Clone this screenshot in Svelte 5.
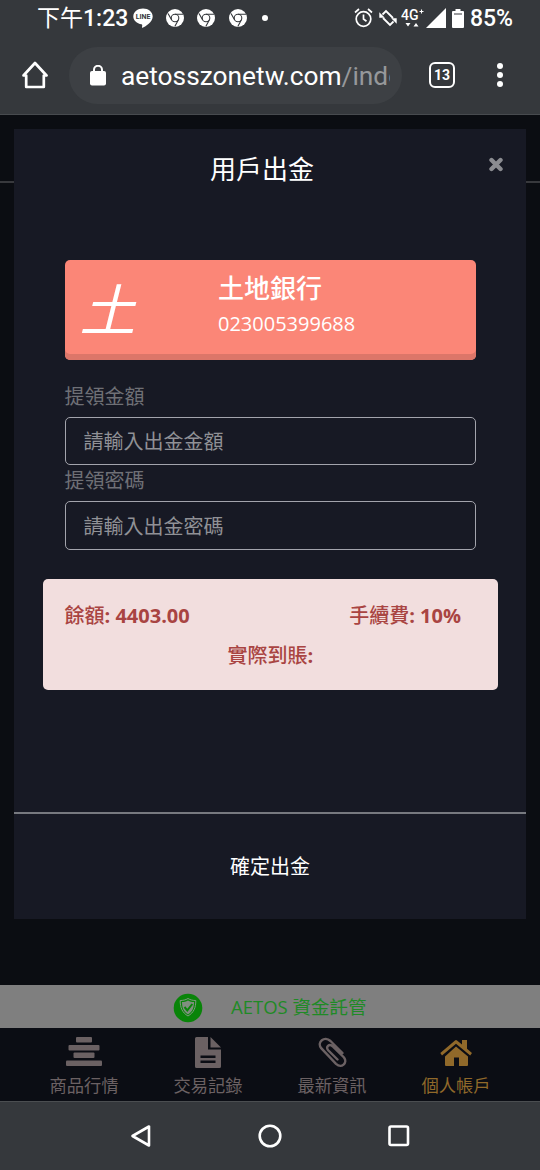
<script>
  const bank = { logo: '土', name: '土地銀行', account: '023005399688' };

  const fields = [
    { id: 'amount', label: '提領金額', placeholder: '請輸入出金金額', type: 'text' },
    { id: 'password', label: '提領密碼', placeholder: '請輸入出金密碼', type: 'password' }
  ];

  const tabs = [
    { icon: 'market', label: '商品行情' },
    { icon: 'records', label: '交易記錄' },
    { icon: 'news', label: '最新資訊' },
    { icon: 'account', label: '個人帳戶' }
  ];

  let values = $state({ amount: '', password: '' });
  let activeTab = $state('account');
  let showModal = $state(true);
</script>

<div class="screen">
  <header class="status">
    <span class="clock"><span>下午</span>1:23</span>
    <svg class="line-app" width="20" height="20" viewBox="0 0 20 20">
      <path d="M10 .5C4.6.5.3 4 .3 8.4c0 3.9 3.5 7.1 8.2 7.8 1.3.3.6 1.6.5 3 0 .6.5.6 1.1.3 2.2-1 9.6-5.6 9.6-11.1C19.7 4 15.4.5 10 .5z" fill="#fff" />
      <text x="10" y="11" text-anchor="middle">LINE</text>
    </svg>
    {#each [0, 1, 2] as n (n)}
      <svg class="chrome" width="18" height="18" viewBox="0 0 18 18">
        <circle cx="9" cy="9" r="9" fill="#fff" />
        <g fill="none" stroke="#35383c" stroke-width="1.1">
          <circle cx="9" cy="9" r="3.8" />
          <path d="M9 5.2h8.2M5.7 11 2 4.5M12.3 11 8.8 17.5" />
        </g>
      </svg>
    {/each}
    <span class="more"></span>
    <div class="system">
      <svg width="19" height="20" viewBox="0 0 19 20" fill="none" stroke="#fff" stroke-width="1.7">
        <circle cx="9.5" cy="11" r="7.3" />
        <path d="M9.5 6.5V11l3 2.2M1 4.5 5 1M18 4.5 14 1" />
      </svg>
      <svg class="rotate" width="18" height="18" viewBox="0 0 18 18" fill="none" stroke="#fff" stroke-width="1.8">
        <path d="M3.5 5.5 7 2l7 7M14.500 12.500 11 16l-7-7" />
        <path d="M.3 3.300v5.500h5.500zM17.700 14.700V9.200h-5.500z" fill="#fff" stroke="none" />
      </svg>
      <svg class="network" width="24" height="22" viewBox="0 0 24 22">
        <text x="0" y="13">4G</text>
        <path d="M18.5 4.5h4M20.5 2.5v4" stroke="#fff" stroke-width="1.1" />
        <path d="M4.500 16h5L7 19.500zM12.500 19.500h5L15 16z" fill="#fff" />
      </svg>
      <svg class="signal" width="20" height="20" viewBox="0 0 20 20"><path d="M20 0v20H0z" fill="#fff" /></svg>
      <svg class="battery" width="12" height="19" viewBox="0 0 12 19">
        <path d="M3.5 0h5v2H11q1 0 1 1v15q0 1-1 1H1q-1 0-1-1V3q0-1 1-1h2.5z" fill="#fff" />
        <path d="M2 5h8" stroke="#77797c" stroke-width="1.5" />
      </svg>
      <span class="percent">85%</span>
    </div>
  </header>

  <div class="toolbar">
    <svg class="home" width="26" height="28" viewBox="0 0 26 28" fill="none" stroke="#fff" stroke-width="2.7" stroke-linejoin="round">
      <path d="M1.5 14.5 13 2l11.5 12.5h-2.700V26H4.200V14.500z" />
    </svg>
    <div class="url">
      <svg width="16" height="21" viewBox="0 0 16 21">
        <rect y="6" width="16" height="14.5" rx="2" fill="#fff" />
        <path d="M4 7V4.800a4 4 0 0 1 8 0V7" fill="none" stroke="#fff" stroke-width="2" />
      </svg>
      <span class="address">aetosszonetw.com<span>/inde</span></span>
    </div>
    <span class="tab-count">13</span>
    <span class="kebab"><i></i><i></i><i></i></span>
  </div>

  <main class="page">
    <div class="page-header"></div>
    <div class="page-body"></div>

    <div class="trust">
      <svg width="30" height="30" viewBox="0 0 30 30">
        <circle cx="15" cy="15" r="14.3" fill="#098409" />
        <path d="M15 5.5c2.5 1.5 5 2 7.8 2 0 7-1.8 12-7.8 15.5C9 19.5 7.2 14.5 7.2 7.500c2.800 0 5.300-.5 7.800-2z" fill="none" stroke="#7f9a7f" stroke-width="1" />
        <path d="M15 7.500c2 1.200 4 1.600 6 1.600 0 5.500-1.300 9.500-6 12.400C10.300 18.600 9 14.600 9 9.100c2 0 4-.4 6-1.600z" fill="#7f8f7f" />
        <path d="m11.500 14 2.800 3.300 5-6.300" fill="none" stroke="#098409" stroke-width="2" />
      </svg>
      <span>AETOS 資金託管</span>
    </div>

    <nav class="tabs">
      {#each tabs as tab (tab.icon)}
        <button class="tab" class:active={tab.icon === activeTab} onclick={() => (activeTab = tab.icon)}>
          <svg width="36" height="32" viewBox="0 0 36 32" fill="currentColor">
            {#if tab.icon === 'market'}
              <rect x="10" y="0" width="16" height="5.5" rx="1" />
              <rect x="2.5" y="8" width="31" height="5.5" rx="1" />
              <rect x="7.5" y="15.500" width="21" height="5.500" rx="1" />
              <rect x="0" y="23.500" width="36" height="5.500" rx="1" />
            {:else if tab.icon === 'records'}
              <path fill-rule="evenodd" d="M6.500 0H18v12.500h13V29.500q0 1.500-1.500 1.500H6.500Q5 31 5 29.500v-28Q5 0 6.500 0zM10.500 18.500V21h15v-2.500zM10.500 23.500V26h15v-2.500z" />
              <path d="M20.500 0 31 10.500H20.500z" />
            {:else if tab.icon === 'news'}
              <path
                d="M28.500 16 16.500 4C10.500-1.500 2.500 5 7.200 11.200L22 26.800c5.500 5 12-.8 8-6.300L18.500 9.200c-3.500-2.800-7 .8-4.300 4.100L23.500 22.500"
                fill="none" stroke="currentColor" stroke-width="2.4" stroke-linecap="round"
              />
            {:else}
              <path d="M18 9.500 30 19.500v8.500q0 1-1 1h-8v-8.500h-5V29H8q-1 0-1-1v-8.500z" />
              <path d="M2.300 16 17 3.500q1-.8 2 0l5 4.100V3h5v8.700l5 4.300-1.800 2.400L18 6.800 4 18.400z" />
            {/if}
          </svg>
          <span>{tab.label}</span>
        </button>
      {/each}
    </nav>

    {#if showModal}
      <section class="modal">
        <div class="modal-header">
          <h4>用戶出金</h4>
          <button class="close" aria-label="close" onclick={() => (showModal = false)}>
            <svg width="14" height="15" viewBox="0 0 14 15"><path d="m2.500 3 9 9M11.500 3l-9 9" stroke="#8b8c91" stroke-width="4.400" stroke-linecap="round" /></svg>
          </button>
        </div>

        <div class="modal-body">
          <div class="card">
            <i class="logo">{bank.logo}</i>
            <div class="bank">
              <strong>{bank.name}</strong>
              <span>{bank.account}</span>
            </div>
          </div>

          {#each fields as field (field.id)}
            <label for={field.id}>{field.label}</label>
            <input id={field.id} type={field.type} placeholder={field.placeholder} bind:value={values[field.id]} />
          {/each}

          <div class="summary">
            <div class="row">
              <span>餘額<b>: 4403.00</b></span>
              <span>手續費<b>: 10%</b></span>
            </div>
            <div class="received">實際到賬<b>:</b></div>
          </div>
        </div>

        <button class="submit">確定出金</button>
      </section>
    {/if}
  </main>

  <footer class="android-nav">
    <svg width="22" height="24" viewBox="0 0 22 24"><path d="M19 2.500v19L2.500 12z" /></svg>
    <svg width="24" height="24" viewBox="0 0 24 24"><circle cx="12" cy="12" r="10.3" /></svg>
    <svg width="22" height="22" viewBox="0 0 22 22"><rect x="1.5" y="1.5" width="18.5" height="18.5" rx="1.5" /></svg>
  </footer>
</div>

<style>
  :global(body) {
    background: #35383c;
  }

  .screen {
    display: flex;
    flex-direction: column;
    width: 540px;
    height: 1170px;
    overflow: hidden;
    background: #35383c;
    color: #fff;
    font-family: "Open Sans", "Noto Sans CJK TC", sans-serif;
  }

  button {
    margin: 0;
    padding: 0;
    border: none;
    background: none;
    color: inherit;
    font-family: inherit;
  }

  svg {
    display: block;
    flex: none;
  }

  /* Status bar */

  .status {
    display: flex;
    align-items: center;
    height: 36px;
    padding: 0 27px 0 37px;
    box-sizing: border-box;
    font: 500 23px/36px Roboto, "Noto Sans CJK TC", sans-serif;
  }

  .clock {
    width: 96px;
    padding-top: 1px;
    white-space: nowrap;
  }

  .clock span {
    font-weight: 400;
  }

  .line-app text {
    font: bold 7px Roboto, sans-serif;
    fill: #35383c;
  }

  .chrome {
    margin-left: 13.2px;
  }

  .more {
    width: 6px;
    height: 6px;
    margin-left: 15px;
    border-radius: 50%;
    background: #fff;
  }

  .system {
    display: flex;
    align-items: center;
    margin-left: auto;
  }

  .rotate {
    margin-left: 6px;
  }

  .network {
    margin-left: 4px;
  }

  .network text {
    font: 500 14px Roboto, sans-serif;
    fill: #fff;
  }

  .signal {
    margin-left: 1px;
  }

  .battery {
    margin: 0 6px;
  }

  .percent {
    padding-top: 1px;
  }

  /* Browser toolbar */

  .toolbar {
    display: flex;
    align-items: center;
    height: 79px;
    padding: 0 37px 0 22px;
    box-sizing: border-box;
    border-bottom: 1px solid #484b4f;
  }

  .url {
    display: flex;
    align-items: center;
    width: 333px;
    height: 57px;
    margin-left: 21px;
    padding: 0 12px 0 21px;
    box-sizing: border-box;
    border-radius: 29px;
    background: #3d4044;
  }

  .address {
    width: 269px;
    margin-left: 15px;
    padding-top: 1px;
    overflow: hidden;
    white-space: nowrap;
    font: 26.3px/34px Roboto, sans-serif;
  }

  .address span {
    color: #96989b;
  }

  .tab-count {
    width: 26px;
    height: 26px;
    margin-left: 27px;
    box-sizing: border-box;
    border: 2.5px solid #fff;
    border-radius: 6px;
    font: bold 14px/22px Roboto, sans-serif;
    text-align: center;
  }

  .kebab {
    display: flex;
    flex-direction: column;
    gap: 3px;
    margin-left: auto;
  }

  .kebab i {
    width: 6px;
    height: 6px;
    border-radius: 50%;
    background: #fff;
  }

  /* Page under the dialog */

  .page {
    position: relative;
    display: flex;
    flex-direction: column;
    height: 986px;
    background: #0b0d12;
  }

  .page-header {
    height: 66px;
    border-bottom: 2px solid #38393d;
  }

  .page-body {
    flex: 1;
  }

  .trust {
    display: flex;
    align-items: center;
    height: 43px;
    padding-left: 173px;
    background: #7f7f7f;
    color: #1f8a26;
    font-size: 18.5px;
  }

  .trust svg {
    margin-top: 2px;
  }

  .trust span {
    margin: -2px 0 0 28px;
  }

  .tabs {
    display: flex;
    height: 73px;
    padding: 0 22px;
    box-sizing: border-box;
    background: #0b0d14;
  }

  .tab {
    display: flex;
    flex: 1;
    flex-direction: column;
    align-items: center;
    padding-top: 9px;
    color: #6b6163;
    font-size: 17.3px;
    line-height: 25px;
  }

  .tab span {
    margin-top: 4px;
  }

  .tab.active {
    color: #90692a;
  }

  /* Dialog */

  .modal {
    position: absolute;
    top: 14px;
    left: 14px;
    display: flex;
    flex-direction: column;
    width: 512px;
    height: 790px;
    background: #171924;
  }

  .modal-header {
    display: flex;
    align-items: center;
    justify-content: space-between;
    height: 80px;
    padding: 0 23px 0 196px;
  }

  h4 {
    margin: 0;
    font-size: 26px;
    font-weight: 400;
    line-height: 36px;
  }

  .close {
    margin-top: -9px;
  }

  .modal-body {
    flex: 1;
    padding: 50.5px 50px 0 50.5px;
  }

  .card {
    display: flex;
    height: 100px;
    margin-bottom: 21px;
    box-sizing: border-box;
    border-radius: 5px;
    background: #fb8677;
    box-shadow: inset 0 -6px 0 #dc7669;
  }

  .logo {
    width: 153.5px;
    padding-left: 15px;
    box-sizing: border-box;
    font-size: 56px;
    line-height: 98px;
  }

  .bank {
    display: flex;
    flex-direction: column;
    padding-top: 10px;
  }

  .bank strong {
    font-size: 26px;
    font-weight: 500;
    line-height: 36px;
  }

  .bank span {
    font-size: 20px;
    line-height: 36px;
  }

  label {
    display: block;
    height: 36px;
    color: #6f7076;
    font-size: 20px;
    line-height: 31px;
  }

  input {
    display: block;
    width: 100%;
    height: 48.5px;
    padding: 2px 18px 0;
    box-sizing: border-box;
    border: 1px solid #a3a4ac;
    border-radius: 5px;
    outline: 0;
    background: none;
    color: #fff;
    font-family: inherit;
    font-size: 20px;
  }

  input::placeholder {
    color: #909196;
    opacity: 1;
  }

  .summary {
    height: 111.5px;
    margin: 29px -22px 0;
    padding: 17px 37px 0 22px;
    box-sizing: border-box;
    border-radius: 5px;
    background: #f2dede;
    color: #a94442;
    font-size: 20px;
    font-weight: 500;
    line-height: 40px;
  }

  .row {
    display: flex;
    justify-content: space-between;
  }

  .received {
    margin-right: -15px;
    text-align: center;
  }

  .submit {
    height: 107px;
    padding-bottom: 2px;
    border-top: 2px solid #77797f;
    font-size: 20px;
  }

  /* System navigation */

  .android-nav {
    display: flex;
    align-items: center;
    height: 69px;
    padding: 0 130px 1px;
    justify-content: space-between;
    box-sizing: border-box;
    border-top: 1px solid #4b4e51;
  }

  .android-nav svg {
    fill: none;
    stroke: #fff;
    stroke-width: 2.6;
    stroke-linejoin: round;
  }
</style>
